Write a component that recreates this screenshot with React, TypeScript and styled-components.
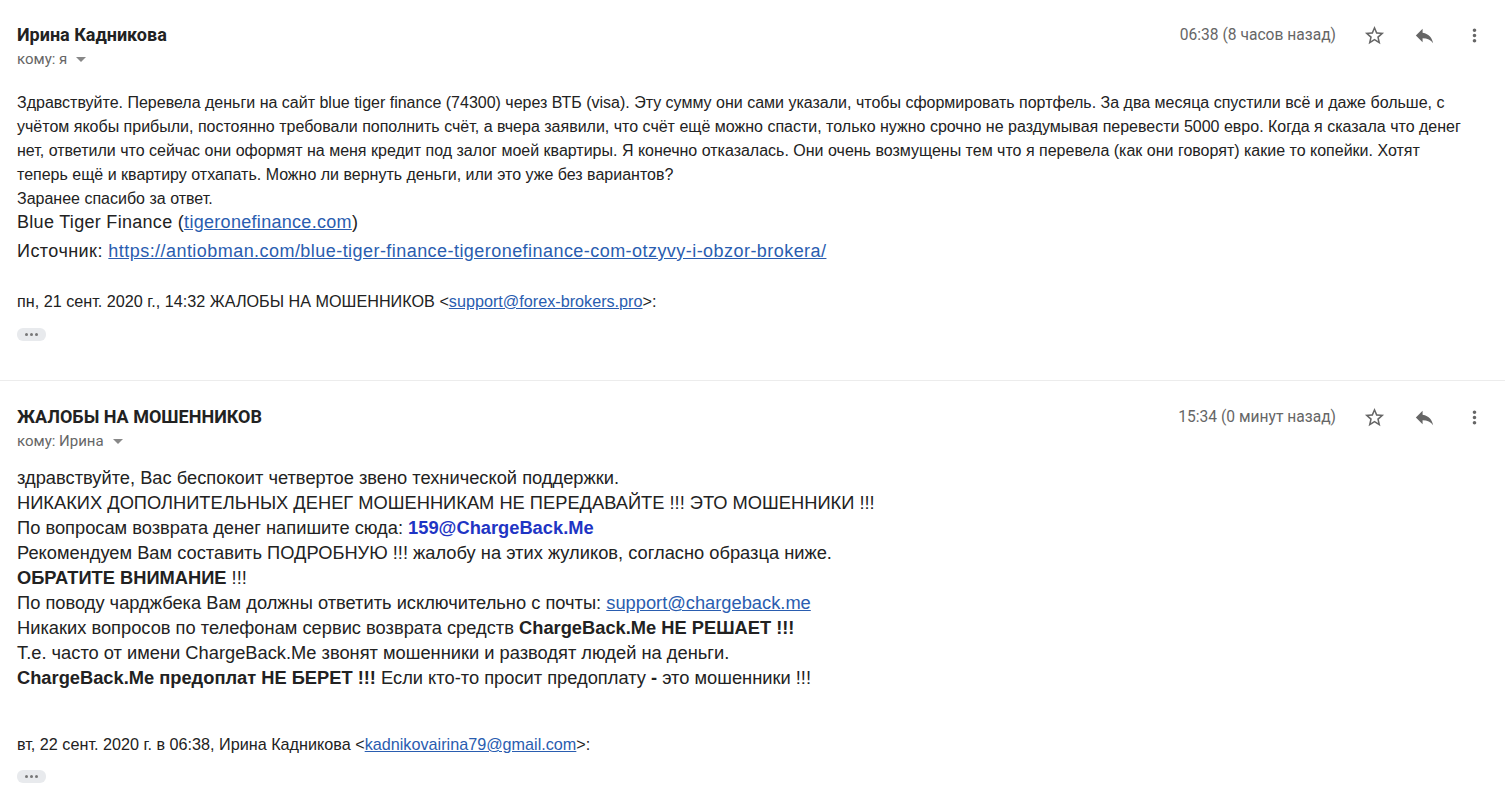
import React from "react";
import styled, { createGlobalStyle } from "styled-components";

const GlobalStyle = createGlobalStyle`
  body {
    margin: 0;
    background: #ffffff;
    font-family: "Liberation Sans", Arial, sans-serif;
    color: #222222;
  }
`;

const Page = styled.div`
  width: 1505px;
  height: 804px;
  overflow: hidden;
  background: #fff;
`;

const Message = styled.section<{ $first?: boolean }>`
  padding: ${(p) => (p.$first ? "24px" : "25px")} 6px 0 17px;
  border-bottom: ${(p) => (p.$first ? "1px solid #ececec" : "none")};
  padding-bottom: ${(p) => (p.$first ? "39px" : "0")};
`;

const HeaderRow = styled.div`
  display: flex;
  justify-content: space-between;
  align-items: flex-start;
`;

const Sender = styled.div`
  display: flex;
  flex-direction: column;
`;

const Name = styled.div`
  font-family: Roboto, "Liberation Sans", sans-serif;
  font-weight: 700;
  font-size: 18px;
  line-height: 22px;
  color: #222;
`;

const Recipient = styled.div`
  font-family: Roboto, "Liberation Sans", sans-serif;
  font-size: 15px;
  line-height: 18px;
  color: #666;
  margin-top: 4px;
  display: flex;
  align-items: center;
  gap: 9px;
`;

const Caret = styled.span`
  width: 0;
  height: 0;
  border-left: 5px solid transparent;
  border-right: 5px solid transparent;
  border-top: 5px solid #888;
`;

const Meta = styled.div`
  display: flex;
  align-items: center;
`;

const Time = styled.span`
  font-family: Roboto, "Liberation Sans", sans-serif;
  font-size: 15.6px;
  line-height: 22px;
  color: #666;
  margin-right: 13px;
`;

const IconButton = styled.span`
  width: 50px;
  height: 22px;
  display: flex;
  align-items: center;
  justify-content: center;
  svg {
    fill: #666;
  }
`;

const Body = styled.div<{ $size: number; $lh: number; $mt: number }>`
  font-size: ${(p) => p.$size}px;
  line-height: ${(p) => p.$lh}px;
  margin-top: ${(p) => p.$mt}px;
  color: #222;
`;

const Line = styled.div`
  white-space: nowrap;
`;

const BigLine = styled.div<{ $mt: number; $ls?: number }>`
  font-size: 18px;
  line-height: 26px;
  margin-top: ${(p) => p.$mt}px;
  letter-spacing: ${(p) => p.$ls ?? 0}px;
  white-space: nowrap;
`;

const Link = styled.a`
  color: #2a5db0;
  text-decoration: underline;
`;

const StrongBlue = styled.b`
  color: #1f35c4;
`;

const Quote = styled.div<{ $mt: number }>`
  font-size: 16.2px;
  line-height: 19px;
  color: #222;
  margin-top: ${(p) => p.$mt}px;
  white-space: nowrap;
`;

const Dots = styled.div<{ $mt: number }>`
  width: 29px;
  height: 13px;
  margin-top: ${(p) => p.$mt}px;
  background: #e8eaed;
  border-radius: 6px;
  display: flex;
  align-items: center;
  justify-content: center;
  gap: 2px;
  span {
    width: 3px;
    height: 3px;
    border-radius: 50%;
    background: #777;
  }
`;

const StarIcon = () => (
  <svg width="23" height="23" viewBox="0 0 24 24">
    <path d="M22 9.24l-7.19-.62L12 2 9.19 8.63 2 9.24l5.46 4.73L5.82 21 12 17.27 18.18 21l-1.63-7.03L22 9.24zM12 15.4l-3.760 2.27 1-4.28-3.32-2.88 4.38-.38L12 6.1l1.71 4.04 4.38.38-3.32 2.88 1 4.28L12 15.4z" />
  </svg>
);

const ReplyIcon = () => (
  <svg width="23" height="23" viewBox="0 0 24 24">
    <path d="M10 9V5l-7 7 7 7v-4.1c5 0 8.5 1.6 11 5.1-1-5-4-10-11-11z" />
  </svg>
);

const MoreIcon = () => (
  <svg width="21" height="21" viewBox="0 0 24 24">
    <path d="M12 8c1.1 0 2-.9 2-2s-.9-2-2-2-2 .9-2 2 .9 2 2 2zm0 2c-1.1 0-2 .9-2 2s.9 2 2 2 2-.9 2-2-.9-2-2-2zm0 6c-1.1 0-2 .9-2 2s.9 2 2 2 2-.9 2-2-.9-2-2-2z" />
  </svg>
);

type HeaderProps = { name: string; to: string; time: string };

const Header: React.FC<HeaderProps> = ({ name, to, time }) => (
  <HeaderRow>
    <Sender>
      <Name>{name}</Name>
      <Recipient>
        кому: {to} <Caret />
      </Recipient>
    </Sender>
    <Meta>
      <Time>{time}</Time>
      <IconButton>
        <StarIcon />
      </IconButton>
      <IconButton>
        <ReplyIcon />
      </IconButton>
      <IconButton>
        <MoreIcon />
      </IconButton>
    </Meta>
  </HeaderRow>
);

const DotsButton: React.FC<{ mt: number }> = ({ mt }) => (
  <Dots $mt={mt}>
    <span />
    <span />
    <span />
  </Dots>
);

const App: React.FC = () => {
  return (
    <Page>
      <GlobalStyle />
      <Message $first>
        <Header name="Ирина Кадникова" to="я" time="06:38 (8 часов назад)" />
        <Body $size={16} $lh={24} $mt={23}>
          <Line>
            Здравствуйте. Перевела деньги на сайт blue tiger finance (74300) через ВТБ (visa). Эту сумму они сами
            указали, чтобы сформировать портфель. За два месяца спустили всё и даже больше, с
          </Line>
          <Line>
            учётом якобы прибыли, постоянно требовали пополнить счёт, а вчера заявили, что счёт ещё можно спасти,
            только нужно срочно не раздумывая перевести 5000 евро. Когда я сказала что денег
          </Line>
          <Line>
            нет, ответили что сейчас они оформят на меня кредит под залог моей квартиры. Я конечно отказалась. Они
            очень возмущены тем что я перевела (как они говорят) какие то копейки. Хотят
          </Line>
          <Line>теперь ещё и квартиру отхапать. Можно ли вернуть деньги, или это уже без вариантов?</Line>
          <Line>Заранее спасибо за ответ.</Line>
          <BigLine $mt={-2} $ls={0.3}>
            Blue Tiger Finance (<Link>tigeronefinance.com</Link>)
          </BigLine>
          <BigLine $mt={3} $ls={0.45}>
            Источник: <Link>https://antiobman.com/blue-tiger-finance-tigeronefinance-com-otzyvy-i-obzor-brokera/</Link>
          </BigLine>
        </Body>
        <Quote $mt={28}>
          пн, 21 сент. 2020 г., 14:32 ЖАЛОБЫ НА МОШЕННИКОВ &lt;<Link>support@forex-brokers.pro</Link>&gt;:
        </Quote>
        <DotsButton mt={17} />
      </Message>
      <Message>
        <Header name="ЖАЛОБЫ НА МОШЕННИКОВ" to="Ирина" time="15:34 (0 минут назад)" />
        <Body $size={18.3} $lh={25} $mt={15}>
          <Line>здравствуйте, Вас беспокоит четвертое звено технической поддержки.</Line>
          <Line>НИКАКИХ ДОПОЛНИТЕЛЬНЫХ ДЕНЕГ МОШЕННИКАМ НЕ ПЕРЕДАВАЙТЕ !!! ЭТО МОШЕННИКИ !!!</Line>
          <Line>
            По вопросам возврата денег напишите сюда: <StrongBlue>159@ChargeBack.Me</StrongBlue>
          </Line>
          <Line>Рекомендуем Вам составить ПОДРОБНУЮ !!! жалобу на этих жуликов, согласно образца ниже.</Line>
          <Line>
            <b>ОБРАТИТЕ ВНИМАНИЕ</b> !!!
          </Line>
          <Line>
            По поводу чарджбека Вам должны ответить исключительно с почты: <Link>support@chargeback.me</Link>
          </Line>
          <Line>
            Никаких вопросов по телефонам сервис возврата средств <b>ChargeBack.Me НЕ РЕШАЕТ !!!</b>
          </Line>
          <Line>Т.е. часто от имени ChargeBack.Me звонят мошенники и разводят людей на деньги.</Line>
          <Line>
            <b>ChargeBack.Me предоплат НЕ БЕРЕТ !!!</b> Если кто-то просит предоплату <b>-</b> это мошенники !!!
          </Line>
        </Body>
        <Quote $mt={45}>
          вт, 22 сент. 2020 г. в 06:38, Ирина Кадникова &lt;<Link>kadnikovairina79@gmail.com</Link>&gt;:
        </Quote>
        <DotsButton mt={16} />
      </Message>
    </Page>
  );
};

export default App;
